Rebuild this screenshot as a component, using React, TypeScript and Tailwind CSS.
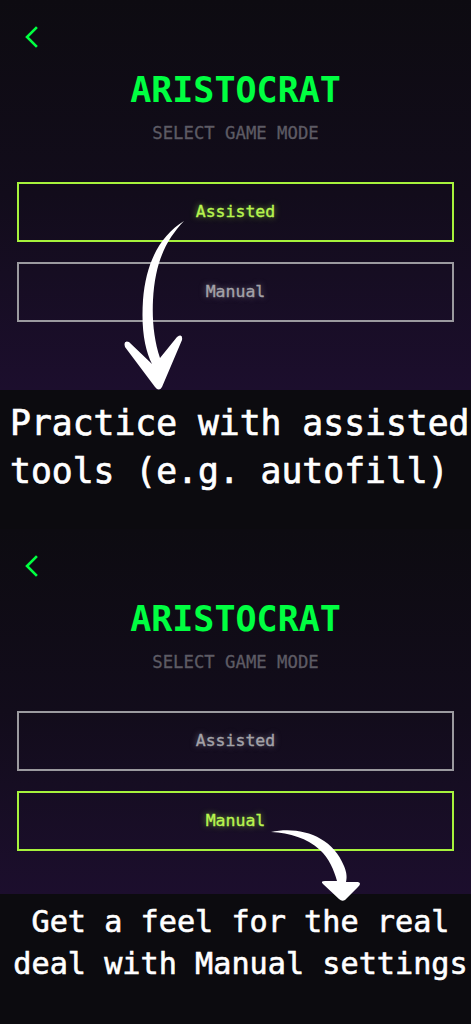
import React from "react";

type Mode = "assisted" | "manual";

const MONO = "font-['DejaVu_Sans_Mono','Liberation_Mono',monospace]";

function BackChevron() {
  return (
    <svg width="14" height="22" viewBox="0 0 14 22" className="ml-[24px]">
      <path
        d="M12 2 L3 11 L12 20"
        fill="none"
        stroke="#00ff41"
        strokeWidth="2.6"
        strokeLinecap="square"
      />
    </svg>
  );
}

function ModeButton({ label, active }: { label: string; active: boolean }) {
  return (
    <div
      className={`h-[60px] flex items-center justify-center border-2 ${
        active ? "border-[#a6f23c]" : "border-[#9b9a9f]"
      }`}
    >
      <span
        className={`text-[16.5px] leading-[20px] ${
          active
            ? "text-[#b8f550] [-webkit-text-stroke:0.35px_#b8f550] [text-shadow:0_0_6px_rgba(170,245,70,0.7)]"
            : "text-[#a3a2a8] [-webkit-text-stroke:0.35px_#a3a2a8] [text-shadow:0_0_6px_rgba(200,200,210,0.5)]"
        }`}
      >
        {label}
      </span>
    </div>
  );
}

function ModeScreen({ selected, height }: { selected: Mode; height: string }) {
  return (
    <div
      className={`${height} pt-[26px] bg-linear-to-b from-[#0d0b11] via-[#120c1b] to-[#1c0e2d]`}
    >
      <BackChevron />
      <h1 className="mt-[22px] text-center text-[35px] leading-[40px] font-bold text-[#00ff41]">
        ARISTOCRAT
      </h1>
      <p className="mt-[13px] text-center text-[17.3px] leading-[20px] text-[#5d5b64] [-webkit-text-stroke:0.3px_#5d5b64]">
        SELECT GAME MODE
      </p>
      <div className="mt-[39px] mx-[17px] flex flex-col gap-[20px]">
        <ModeButton label="Assisted" active={selected === "assisted"} />
        <ModeButton label="Manual" active={selected === "manual"} />
      </div>
    </div>
  );
}

export default function App() {
  return (
    <div className={`relative w-[471px] h-[1024px] overflow-hidden bg-[#0c0b0f] ${MONO}`}>
      <ModeScreen selected="assisted" height="h-[390px]" />

      <div className="h-[139px] pt-[9px] pl-[10px] text-white text-[34.7px] leading-[48px] whitespace-pre [-webkit-text-stroke:0.7px_white]">
        <div>Practice with assisted</div>
        <div>tools (e.g. autofill)</div>
      </div>

      <ModeScreen selected="manual" height="h-[365px]" />

      <div className="h-[130px] pt-[7px] pl-[10px] text-center text-white text-[30.2px] leading-[42px] whitespace-pre [-webkit-text-stroke:0.6px_white]">
        <div>Get a feel for the real</div>
        <div>deal with Manual settings</div>
      </div>

      {/* hand-drawn pointer arrows */}
      <svg
        className="absolute inset-0 pointer-events-none"
        width="471"
        height="1024"
        viewBox="0 0 471 1024"
      >
        <path
          fill="#ffffff"
          d="M184 221
             C 160 236, 146 262, 143 300
             C 141 330, 145 350, 152 364
             L 129 342
             Q 123 340, 125 347
             L 155 387
             Q 159 392, 162 387
             L 182 340
             Q 183 333, 177 337
             L 160 358
             C 154 340, 152 320, 153 300
             C 155 262, 166 240, 184 221 Z"
        />
        <path
          fill="#ffffff"
          d="M271 832
             C 300 826, 332 836, 344 866
             C 347 873, 347 878, 346 882
             L 358 882
             Q 362 883, 358 887
             L 345 900
             Q 342 902, 339 899
             L 323 884
             Q 320 881, 325 881
             L 337 881
             C 334 870, 329 858, 320 850
             C 307 838, 290 833, 271 832 Z"
        />
      </svg>
    </div>
  );
}
